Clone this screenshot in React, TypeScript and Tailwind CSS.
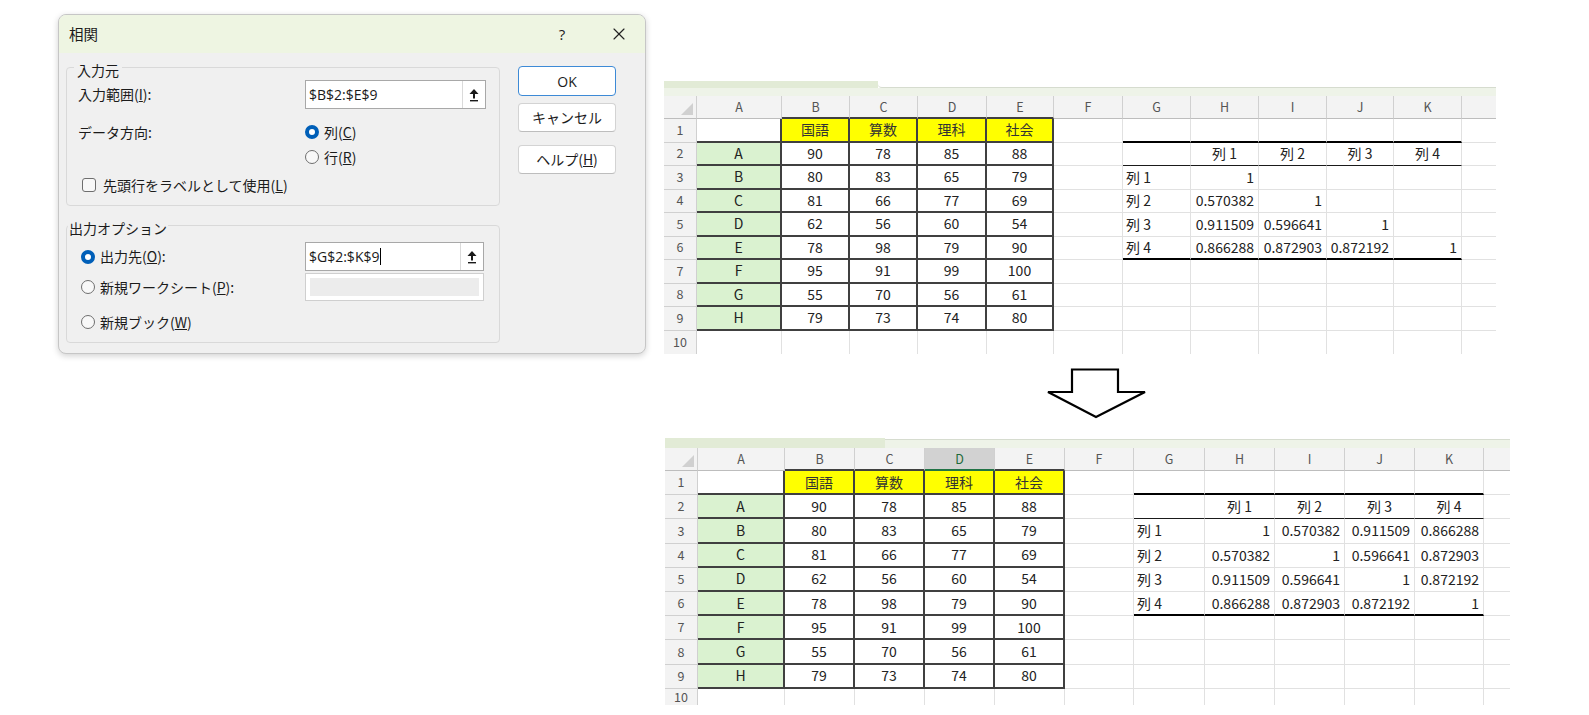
import React from 'react';
import { X } from 'lucide-react';

const names = ['A', 'B', 'C', 'D', 'E', 'F', 'G', 'H'];
const subjects = ['国語', '算数', '理科', '社会'];
const scores = [
  [90, 78, 85, 88],
  [80, 83, 65, 79],
  [81, 66, 77, 69],
  [62, 56, 60, 54],
  [78, 98, 79, 90],
  [95, 91, 99, 100],
  [55, 70, 56, 61],
  [79, 73, 74, 80],
];
const corr = [
  ['1', '0.570382', '0.911509', '0.866288'],
  ['0.570382', '1', '0.596641', '0.872903'],
  ['0.911509', '0.596641', '1', '0.872192'],
  ['0.866288', '0.872903', '0.872192', '1'],
];
const letters = ['', 'A', 'B', 'C', 'D', 'E', 'F', 'G', 'H', 'I', 'J', 'K', 'L'];

function inTable(r: number, c: number) {
  return (r === 1 && c >= 2 && c <= 5) || (r >= 2 && r <= 9 && c >= 1 && c <= 5);
}

function Radio({ checked }: { checked?: boolean }) {
  return checked ? (
    <span className="block w-[14px] h-[14px] rounded-full border-[4px] border-[#005fb8] bg-white shrink-0" />
  ) : (
    <span className="block w-[14px] h-[14px] rounded-full border border-[#6e6e6e] bg-[#f8f8f8] shrink-0" />
  );
}

function UploadIcon() {
  return (
    <svg width="10" height="14" viewBox="0 0 10 14">
      <polygon points="5,1 9.5,6 0.5,6" fill="#1a1a1a" />
      <rect x="4" y="5.5" width="2" height="5" fill="#1a1a1a" />
      <rect x="1" y="12" width="8" height="1.4" fill="#1a1a1a" />
    </svg>
  );
}

function RefInput({ value, cursor, wide }: { value: string; cursor?: boolean; wide?: boolean }) {
  return (
    <div
      className={
        (wide ? 'w-[181px]' : 'w-[179px]') +
        ' h-[29px] bg-white border border-[#a8a8a8] flex items-stretch'
      }
    >
      <div className="flex-1 flex items-center pl-[3px] text-[14px] text-[#1a1a1a] font-['Open_Sans',sans-serif]">
        {value}
        {cursor && <span className="block w-px h-[17px] bg-black ml-[1px]" />}
      </div>
      <div className="w-[23px] border-l border-l-[#dadada] flex items-center justify-center">
        <UploadIcon />
      </div>
    </div>
  );
}

function Btn({ children, primary, h }: { children: React.ReactNode; primary?: boolean; h?: boolean }) {
  return (
    <div
      className={
        'w-[98px] flex items-center justify-center rounded-[4px] bg-white text-[14px] ' +
        (h ? 'h-[30px] ' : 'h-[29px] ') +
        (primary
          ? 'border-[1.5px] border-[#3d8ad6]'
          : 'border border-[#d3d3d3] border-b-[#bdbdbd]')
      }
    >
      {children}
    </div>
  );
}

function Dialog() {
  return (
    <div className="w-[588px] h-[340px] rounded-[8px] border border-[#c6c6c6] bg-[#f0f0f0] shadow-[0_2px_6px_rgba(0,0,0,0.18)] overflow-hidden flex flex-col text-[14px] text-[#1b1b1b]">
      <div className="h-[38px] shrink-0 bg-[#eef5e2] flex items-center pl-[10px] pr-[16px]">
        <span className="text-[14.5px]">相関</span>
        <span className="ml-auto w-[14px] text-center text-[15px] font-['Open_Sans',sans-serif]">?</span>
        <X size={20} strokeWidth={1.4} className="ml-[40px] text-[#222]" />
      </div>
      <div className="flex pl-[7px] pt-[14px]">
        <div className="w-[434px] flex flex-col">
          {/* 入力元 */}
          <div className="h-[139px] border border-[#d9d9d9] rounded-[4px] flex flex-col">
            <div className="-mt-[8px] ml-[7px] px-[3px] w-fit bg-[#f0f0f0] leading-[20px]">入力元</div>
            <div className="flex items-center h-[29px] pl-[11px]">
              <div className="w-[227px]">
                入力範囲(<span className="underline">I</span>):
              </div>
              <RefInput value="$B$2:$E$9" wide />
            </div>
            <div className="flex items-center h-[22px] mt-[12px] pl-[11px]">
              <div className="w-[227px]">データ方向:</div>
              <Radio checked />
              <span className="ml-[5px]">
                列(<span className="underline">C</span>)
              </span>
            </div>
            <div className="flex items-center h-[22px] mt-[3px] pl-[238px]">
              <Radio />
              <span className="ml-[5px]">
                行(<span className="underline">R</span>)
              </span>
            </div>
            <div className="flex items-center h-[22px] mt-[6px] pl-[15px]">
              <span className="block w-[14px] h-[14px] border border-[#6e6e6e] rounded-[3px] bg-[#f8f8f8]" />
              <span className="ml-[7px]">
                先頭行をラベルとして使用(<span className="underline">L</span>)
              </span>
            </div>
          </div>
          {/* 出力オプション */}
          <div className="mt-[19px] h-[118px] border border-[#d9d9d9] rounded-[4px] flex flex-col">
            <div className="-mt-[8px] ml-[1px] px-[1px] w-fit bg-[#f0f0f0] leading-[20px]">出力オプション</div>
            <div className="flex items-center h-[29px] mt-[4px] pl-[14px]">
              <div className="w-[224px] flex items-center">
                <Radio checked />
                <span className="ml-[5px]">
                  出力先(<span className="underline">O</span>):
                </span>
              </div>
              <RefInput value="$G$2:$K$9" cursor />
            </div>
            <div className="flex items-center h-[28px] mt-[2px] pl-[14px]">
              <div className="w-[224px] flex items-center">
                <Radio />
                <span className="ml-[5px]">
                  新規ワークシート(<span className="underline">P</span>):
                </span>
              </div>
              <div className="w-[179px] h-[28px] bg-white border border-[#cfcfcf] p-[4px]">
                <div className="w-full h-full bg-[#ececec]" />
              </div>
            </div>
            <div className="flex items-center h-[22px] mt-[10px] pl-[14px]">
              <Radio />
              <span className="ml-[5px]">
                新規ブック(<span className="underline">W</span>)
              </span>
            </div>
          </div>
        </div>
        <div className="ml-[18px] -mt-[1px] flex flex-col">
          <Btn primary h>
            <span className="font-['Open_Sans',sans-serif]">OK</span>
          </Btn>
          <div className="mt-[7px]">
            <Btn>キャンセル</Btn>
          </div>
          <div className="mt-[13px]">
            <Btn>
              ヘルプ(<span className="underline">H</span>)
            </Btn>
          </div>
        </div>
      </div>
    </div>
  );
}

function Sheet({ full }: { full: boolean }) {
  const cells: React.ReactNode[] = [];
  for (let r = 0; r <= 10; r++) {
    for (let c = 0; c <= 12; c++) {
      const isCorrCol = c >= 7 && c <= 11;
      let right = '';
      if (c === 12) right = '';
      else if (r > 0 && c > 0 && (inTable(r, c) || inTable(r, c + 1))) right = 'border-r-2 border-r-[#404040]';
      else if (r === 0 || c === 0) right = 'border-r border-r-[#d0d0d0]';
      else right = 'border-r border-r-[#e1e1e1]';

      let bottom = '';
      const selected = full && r === 0 && c === 4;
      if (r === 10) bottom = '';
      else if (selected) bottom = 'border-b-2 border-b-[#217346]';
      else if (c > 0 && (inTable(r, c) || inTable(r + 1, c))) bottom = 'border-b-2 border-b-[#404040]';
      else if (isCorrCol && (r === 1 || r === 6)) bottom = 'border-b-2 border-b-black';
      else if (isCorrCol && r === 2) bottom = 'border-b border-b-[#1a1a1a]';
      else if (r === 0) bottom = 'border-b border-b-[#bdbdbd]';
      else if (c === 0) bottom = 'border-b border-b-[#d0d0d0]';
      else bottom = 'border-b border-b-[#e1e1e1]';

      let content: React.ReactNode = null;
      let extra = 'justify-center text-[14px] text-[#222]';
      let bg = r === 0 || c === 0 ? 'bg-[#f3f3f3]' : 'bg-white';

      if (r === 0 && c === 0) {
        extra = 'items-end justify-end pr-[3px] pb-[3px]';
        content = (
          <svg width="12" height="12" viewBox="0 0 12 12">
            <polygon points="12,0 12,12 0,12" fill="#d0d0d0" />
          </svg>
        );
      } else if (r === 0) {
        extra = selected
          ? 'justify-center items-start pt-[2px] text-[12.5px] text-[#1d6b3b]'
          : 'justify-center items-start pt-[2px] text-[12.5px] text-[#555]';
        if (selected) bg = 'bg-[#d2d2d2]';
        content = c === 12 ? (full ? null : <span className="ml-[64px]">L</span>) : letters[c];
      } else if (c === 0) {
        extra = 'justify-center text-[12.5px] text-[#555]';
        content = r;
      } else if (r === 1 && c >= 2 && c <= 5) {
        bg = 'bg-[#ffff00]';
        content = subjects[c - 2];
        extra = 'justify-center text-[14px] text-[#333]';
      } else if (r >= 2 && r <= 9 && c === 1) {
        bg = 'bg-[#daf2d0]';
        content = names[r - 2];
      } else if (r >= 2 && r <= 9 && c >= 2 && c <= 5) {
        content = scores[r - 2][c - 2];
      } else if (r === 2 && c >= 8 && c <= 11) {
        content = `列 ${c - 7}`;
      } else if (r >= 3 && r <= 6 && c === 7) {
        extra = 'justify-start pl-[3px] text-[14px] text-[#222]';
        content = `列 ${r - 2}`;
      } else if (r >= 3 && r <= 6 && c >= 8 && c <= 11) {
        const i = r - 3;
        const j = c - 8;
        extra = 'justify-end pr-[4px] text-[14px] text-[#222]';
        if (full || j <= i) content = corr[i][j];
      }

      cells.push(
        <div
          key={`${r}-${c}`}
          className={`flex items-center overflow-hidden whitespace-nowrap min-w-0 ${bg} ${right} ${bottom} ${extra}`}
        >
          {content}
        </div>
      );
    }
  }
  return (
    <div
      className={
        full
          ? 'grid grid-cols-[33px_87px_70px_70px_70px_70px_69px_71px_70px_70px_70px_69px_26px] grid-rows-[23px_repeat(9,24.2px)_17px]'
          : 'grid grid-cols-[33px_85px_68px_68px_69px_67px_69px_68px_68px_68px_67px_68px_34px] grid-rows-[23px_repeat(9,23.5px)_23.5px]'
      }
    >
      {cells}
    </div>
  );
}

function TopSheet() {
  return (
    <div className="w-[832px] h-[273px] overflow-hidden flex flex-col">
      <div className="h-[15px] shrink-0 flex flex-col">
        <div className="h-[7px] flex">
          <div className="w-[214px] bg-[#e2ebd6]" />
          <div className="flex-1 bg-white border-b border-b-[#d6dccf] rounded-bl-[4px]" />
        </div>
        <div className="flex-1 bg-[#eef3e8]" />
      </div>
      <Sheet full={false} />
    </div>
  );
}

function BottomSheet() {
  return (
    <div className="w-[845px] h-[267px] overflow-hidden flex flex-col">
      <div className="h-[10px] shrink-0 flex">
        <div className="w-[220px] bg-[#e2ebd6]" />
        <div className="flex-1 flex flex-col">
          <div className="h-[2px] bg-white border-b border-b-[#d6dccf]" />
          <div className="flex-1 bg-[#eef3e8]" />
        </div>
      </div>
      <Sheet full />
    </div>
  );
}

export default function App() {
  return (
    <div className="w-[1589px] h-[715px] bg-white flex overflow-hidden font-['Noto_Sans_CJK_JP',sans-serif]">
      <div className="pl-[58px] pt-[14px] shrink-0">
        <Dialog />
      </div>
      <div className="ml-[18px] pt-[81px] flex flex-col shrink-0">
        <TopSheet />
        <div className="h-[84px] shrink-0 pl-[382px] pt-[14px]">
          <svg width="101" height="51" viewBox="0 0 101 51">
            <polygon
              points="26,1.5 72,1.5 72,24 99,24 50,49 2,24 26,24"
              fill="white"
              stroke="black"
              strokeWidth="2.2"
              strokeLinejoin="miter"
            />
          </svg>
        </div>
        <div className="ml-[1px]">
          <BottomSheet />
        </div>
      </div>
    </div>
  );
}
